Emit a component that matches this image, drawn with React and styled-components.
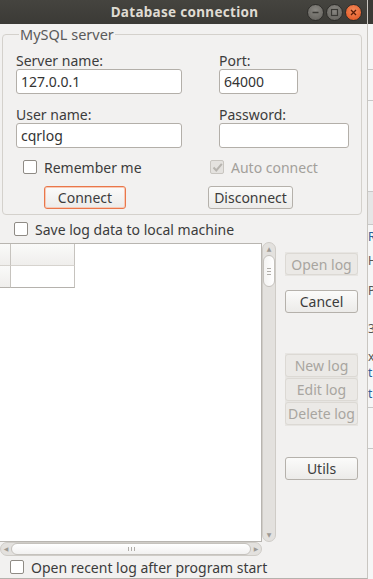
import styled, { createGlobalStyle } from 'styled-components';

const Global = createGlobalStyle`
    html, body {
        margin: 0;
        padding: 0;
        background: #e8e6e3;
    }
    body {
        font-family: "Noto Sans", "DejaVu Sans", sans-serif;
        color: #3c3c3c;
    }
`;

const Screen = styled.div`
    width: 373px;
    height: 579px;
    display: flex;
    overflow: hidden;
`;

const Window = styled.div`
    width: 367px;
    height: 578px;
    display: flex;
    flex-direction: column;
    background: #f2f1f0;
    border-right: 1px solid #c9c6c1;
    border-bottom: 1px solid #b5b2ad;
    flex-shrink: 0;
`;

const TitleBar = styled.div`
    height: 24px;
    display: flex;
    align-items: center;
    background: linear-gradient(#45443f, #3b3a36);
    flex-shrink: 0;
`;

const Title = styled.div`
    flex: 1;
    text-align: center;
    padding-left: 62px;
    font-family: "Noto Sans", sans-serif;
    font-weight: bold;
    font-size: 13.5px;
    color: #dfdbd2;
    letter-spacing: 0.3px;
`;

const WinButtons = styled.div`
    display: flex;
    gap: 2px;
    padding-right: 5px;
`;

const WinButton = styled.div`
    width: 17px;
    height: 17px;
    border-radius: 50%;
    display: flex;
    align-items: center;
    justify-content: center;
    background: ${p => p.$close ? 'radial-gradient(circle at 50% 35%, #f48a5a, #e0521e)' : 'radial-gradient(circle at 50% 35%, #8a8883, #5f5d58)'};
    border: 1px solid #2e2d2a;
    box-sizing: border-box;
`;

const Body = styled.div`
    flex: 1;
    display: flex;
    flex-direction: column;
    font-size: 14px;
    min-height: 0;
`;

const Group = styled.fieldset`
    margin: 3px 5px 0 2px;
    padding: 11px 0 0 13px;
    height: 188px;
    box-sizing: border-box;
    border: 1px solid #d4d1cc;
    border-radius: 4px;
`;

const Legend = styled.legend`
    padding: 0 1px;
    margin-left: 3px;
    font-size: 14.5px;
    color: #5a5a5a;
    line-height: 14px;
`;

const FormGrid = styled.div`
    display: grid;
    grid-template-columns: 203px 1fr;
`;

const Field = styled.div`
    display: flex;
    flex-direction: column;
    height: ${p => p.$h || 54}px;
`;

const Label = styled.div`
    height: 17px;
    line-height: 17px;
    font-size: 14px;
    color: #3c3c3c;
`;

const Input = styled.div`
    width: ${p => p.$w}px;
    height: 25px;
    box-sizing: border-box;
    background: #fff;
    border: 1px solid #b3afa9;
    border-radius: 3px;
    padding: 0 4px;
    line-height: 23px;
    font-size: 14px;
    color: #333;
`;

const CheckRow = styled.label`
    display: flex;
    align-items: center;
    gap: 7px;
    height: ${p => p.$h || 18}px;
    padding-left: ${p => p.$pl || 0}px;
    margin-left: ${p => p.$ml || 0}px;
    font-size: 14px;
    color: ${p => p.$disabled ? '#a3a09b' : '#3c3c3c'};
    flex-shrink: 0;
`;

const Box = styled.span`
    width: 14px;
    height: 14px;
    box-sizing: border-box;
    border: 1px solid ${p => p.$disabled ? '#c8c5c0' : '#8f8b85'};
    border-radius: 2px;
    background: ${p => p.$disabled ? '#e4e2df' : '#fff'};
    display: flex;
    align-items: center;
    justify-content: center;
    flex-shrink: 0;
`;

const Button = styled.div`
    width: ${p => p.$w || 73}px;
    height: ${p => p.$h || 23}px;
    box-sizing: border-box;
    display: flex;
    align-items: center;
    justify-content: center;
    font-size: 14px;
    border-radius: 3px;
    border: 1px solid ${p => p.$focus ? '#e9774a' : p.$disabled ? '#dcd9d4' : '#b5b1ab'};
    background: ${p => p.$disabled ? '#ebe9e6' : 'linear-gradient(#fbfbfa, #ecebe9)'};
    color: ${p => p.$disabled ? '#a8a5a0' : '#3c3c3c'};
    box-shadow: ${p => p.$focus ? 'inset 0 0 0 1px #f7c9b6' : 'none'};
`;

const ButtonRow = styled.div`
    display: grid;
    grid-template-columns: 164px 1fr;
    padding-left: 28px;
    margin-top: 10px;
`;

const Main = styled.div`
    flex: 1;
    display: flex;
    min-height: 0;
`;

const GridPanel = styled.div`
    width: 276px;
    display: flex;
    flex-direction: column;
`;

const GridRow = styled.div`
    display: flex;
    flex: 1;
    min-height: 0;
`;

const Grid = styled.div`
    width: 262px;
    background: #fff;
    border: 1px solid #b8b5b0;
    border-left: none;
    box-sizing: border-box;
`;

const Cells = styled.div`
    display: grid;
    grid-template-columns: 11px 64px;
`;

const Cell = styled.div`
    height: 21px;
    border-right: 1px solid #c6c3be;
    border-bottom: 1px solid ${p => p.$head ? '#d6d3ce' : '#b5b2ad'};
    background: ${p => p.$fixed ? 'linear-gradient(#fafaf9, #efeeec)' : '#fff'};
`;

const VScroll = styled.div`
    width: 14px;
    display: flex;
    flex-direction: column;
    align-items: center;
    background: #e3e1de;
    border: 1px solid #cfccc7;
    border-radius: 7px;
    box-sizing: border-box;
    margin-top: -1px;
`;

const Arrow = styled.div`
    height: 12px;
    width: ${p => p.$w ? `${p.$w}px` : 'auto'};
    display: flex;
    align-items: center;
    justify-content: center;
    color: #9d9a95;
    font-size: 6px;
`;

const VThumb = styled.div`
    width: 12px;
    height: 32px;
    background: linear-gradient(90deg, #f4f3f2, #ffffff);
    border: 1px solid #c5c2bd;
    border-radius: 6px;
    box-sizing: border-box;
    display: flex;
    flex-direction: column;
    align-items: center;
    justify-content: center;
    gap: 2px;
`;

const Grip = styled.span`
    width: 4px;
    height: 1px;
    background: #b0ada8;
`;

const Spacer = styled.div`
    flex: 1;
`;

const HScroll = styled.div`
    height: 14px;
    width: 262px;
    display: flex;
    align-items: center;
    background: #e3e1de;
    border: 1px solid #cfccc7;
    border-radius: 7px;
    box-sizing: border-box;
    flex-shrink: 0;
`;

const HThumb = styled.div`
    flex: 1;
    height: 12px;
    background: linear-gradient(#ffffff, #f2f1f0);
    border: 1px solid #c5c2bd;
    border-radius: 6px;
    box-sizing: border-box;
    display: flex;
    align-items: center;
    justify-content: center;
    gap: 2px;
`;

const VGrip = styled.span`
    width: 1px;
    height: 4px;
    background: #b0ada8;
`;

const SideButtons = styled.div`
    display: flex;
    flex-direction: column;
    padding: 9px 0 0 9px;
`;

const Gap = styled.div`
    height: ${p => p.$h}px;
    flex-shrink: 0;
`;

const DisabledStack = styled.div`
    display: flex;
    flex-direction: column;
    background: #e7e5e2;
    padding: 1px 0;
    gap: 1px;
    width: 73px;
`;

const Outside = styled.div`
    flex: 1;
    background: #f6f6f6;
    display: flex;
    flex-direction: column;
    overflow: hidden;
`;

const OutLine = styled.div`
    height: ${p => p.$h}px;
    flex-shrink: 0;
    border-bottom: ${p => p.$line ? '1px solid #c8c8c8' : 'none'};
    color: ${p => p.$c || '#555'};
    font-size: 12px;
    line-height: ${p => p.$h}px;
    white-space: nowrap;
    background: ${p => p.$bg || 'transparent'};
`;

const Check = ({ checked, disabled }) => (
    <Box $disabled={disabled}>
        {checked && (
            <svg width="11" height="11" viewBox="0 0 11 11">
                <path d="M1.5 5.5 L4.3 8.5 L9.8 1.8" fill="none" stroke="#b7b4af" strokeWidth="2" />
            </svg>
        )}
    </Box>
);

const App = () => {
    return (
        <Screen>
            <Global />
            <Window>
                <TitleBar>
                    <Title>Database connection</Title>
                    <WinButtons>
                        <WinButton>
                            <svg width="9" height="9" viewBox="0 0 9 9"><path d="M1.5 4.5 H7.5" stroke="#3a3935" strokeWidth="1.5" /></svg>
                        </WinButton>
                        <WinButton>
                            <svg width="9" height="9" viewBox="0 0 9 9"><rect x="1.5" y="1.5" width="6" height="6" fill="none" stroke="#3a3935" strokeWidth="1.2" /></svg>
                        </WinButton>
                        <WinButton $close>
                            <svg width="9" height="9" viewBox="0 0 9 9"><path d="M2 2 L7 7 M7 2 L2 7" stroke="#5a1d08" strokeWidth="1.3" /></svg>
                        </WinButton>
                    </WinButtons>
                </TitleBar>
                <Body>
                    <Group>
                        <Legend>MySQL server</Legend>
                        <FormGrid>
                            <Field>
                                <Label>Server name:</Label>
                                <Input $w={166}>127.0.0.1</Input>
                            </Field>
                            <Field>
                                <Label>Port:</Label>
                                <Input $w={79}>64000</Input>
                            </Field>
                            <Field $h={52}>
                                <Label>User name:</Label>
                                <Input $w={166}>cqrlog</Input>
                            </Field>
                            <Field $h={52}>
                                <Label>Password:</Label>
                                <Input $w={130}></Input>
                            </Field>
                            <CheckRow $pl={7}>
                                <Check />
                                Remember me
                            </CheckRow>
                            <CheckRow $disabled $ml={-9}>
                                <Check checked disabled />
                                Auto connect
                            </CheckRow>
                        </FormGrid>
                        <ButtonRow>
                            <Button $w={82} $focus>Connect</Button>
                            <Button $w={85}>Disconnect</Button>
                        </ButtonRow>
                    </Group>
                    <CheckRow $h={28} $pl={14}>
                        <Check />
                        Save log data to local machine
                    </CheckRow>
                    <Main>
                        <GridPanel>
                            <GridRow>
                                <Grid>
                                    <Cells>
                                        <Cell $fixed $head />
                                        <Cell $fixed $head />
                                        <Cell $fixed />
                                        <Cell />
                                    </Cells>
                                </Grid>
                                <VScroll>
                                    <Arrow>▲</Arrow>
                                    <VThumb>
                                        <Grip />
                                        <Grip />
                                        <Grip />
                                    </VThumb>
                                    <Spacer />
                                    <Arrow>▼</Arrow>
                                </VScroll>
                            </GridRow>
                            <HScroll>
                                <Arrow $w={10}>◀</Arrow>
                                <HThumb>
                                    <VGrip />
                                    <VGrip />
                                    <VGrip />
                                </HThumb>
                                <Arrow $w={10}>▶</Arrow>
                            </HScroll>
                            <CheckRow $h={22} $pl={10}>
                                <Check />
                                Open recent log after program start
                            </CheckRow>
                        </GridPanel>
                        <SideButtons>
                            <DisabledStack>
                                <Button $disabled $h={22}>Open log</Button>
                            </DisabledStack>
                            <Gap $h={14} />
                            <Button>Cancel</Button>
                            <Gap $h={40} />
                            <DisabledStack>
                                <Button $disabled $h={23}>New log</Button>
                                <Button $disabled $h={23}>Edit log</Button>
                                <Button $disabled $h={23}>Delete log</Button>
                            </DisabledStack>
                            <Gap $h={31} />
                            <Button>Utils</Button>
                        </SideButtons>
                    </Main>
                </Body>
            </Window>
            <Outside>
                <OutLine $h={24} $bg="#3b3a36" />
                <OutLine $h={15} />
                <OutLine $h={30} $line />
                <OutLine $h={30} $line />
                <OutLine $h={90} $line />
                <OutLine $h={32} $bg="#e6e6e6" $line />
                <OutLine $h={24} $c="#2a6099">R</OutLine>
                <OutLine $h={24}>H</OutLine>
                <OutLine $h={36}>P</OutLine>
                <OutLine $h={40}>3</OutLine>
                <OutLine $h={16}>x</OutLine>
                <OutLine $h={16} $c="#2a6099">t</OutLine>
                <OutLine $h={26} $c="#2a6099" $line>t</OutLine>
                <OutLine $h={40} $line />
                <OutLine $h={30} />
            </Outside>
        </Screen>
    );
};

export default App;
